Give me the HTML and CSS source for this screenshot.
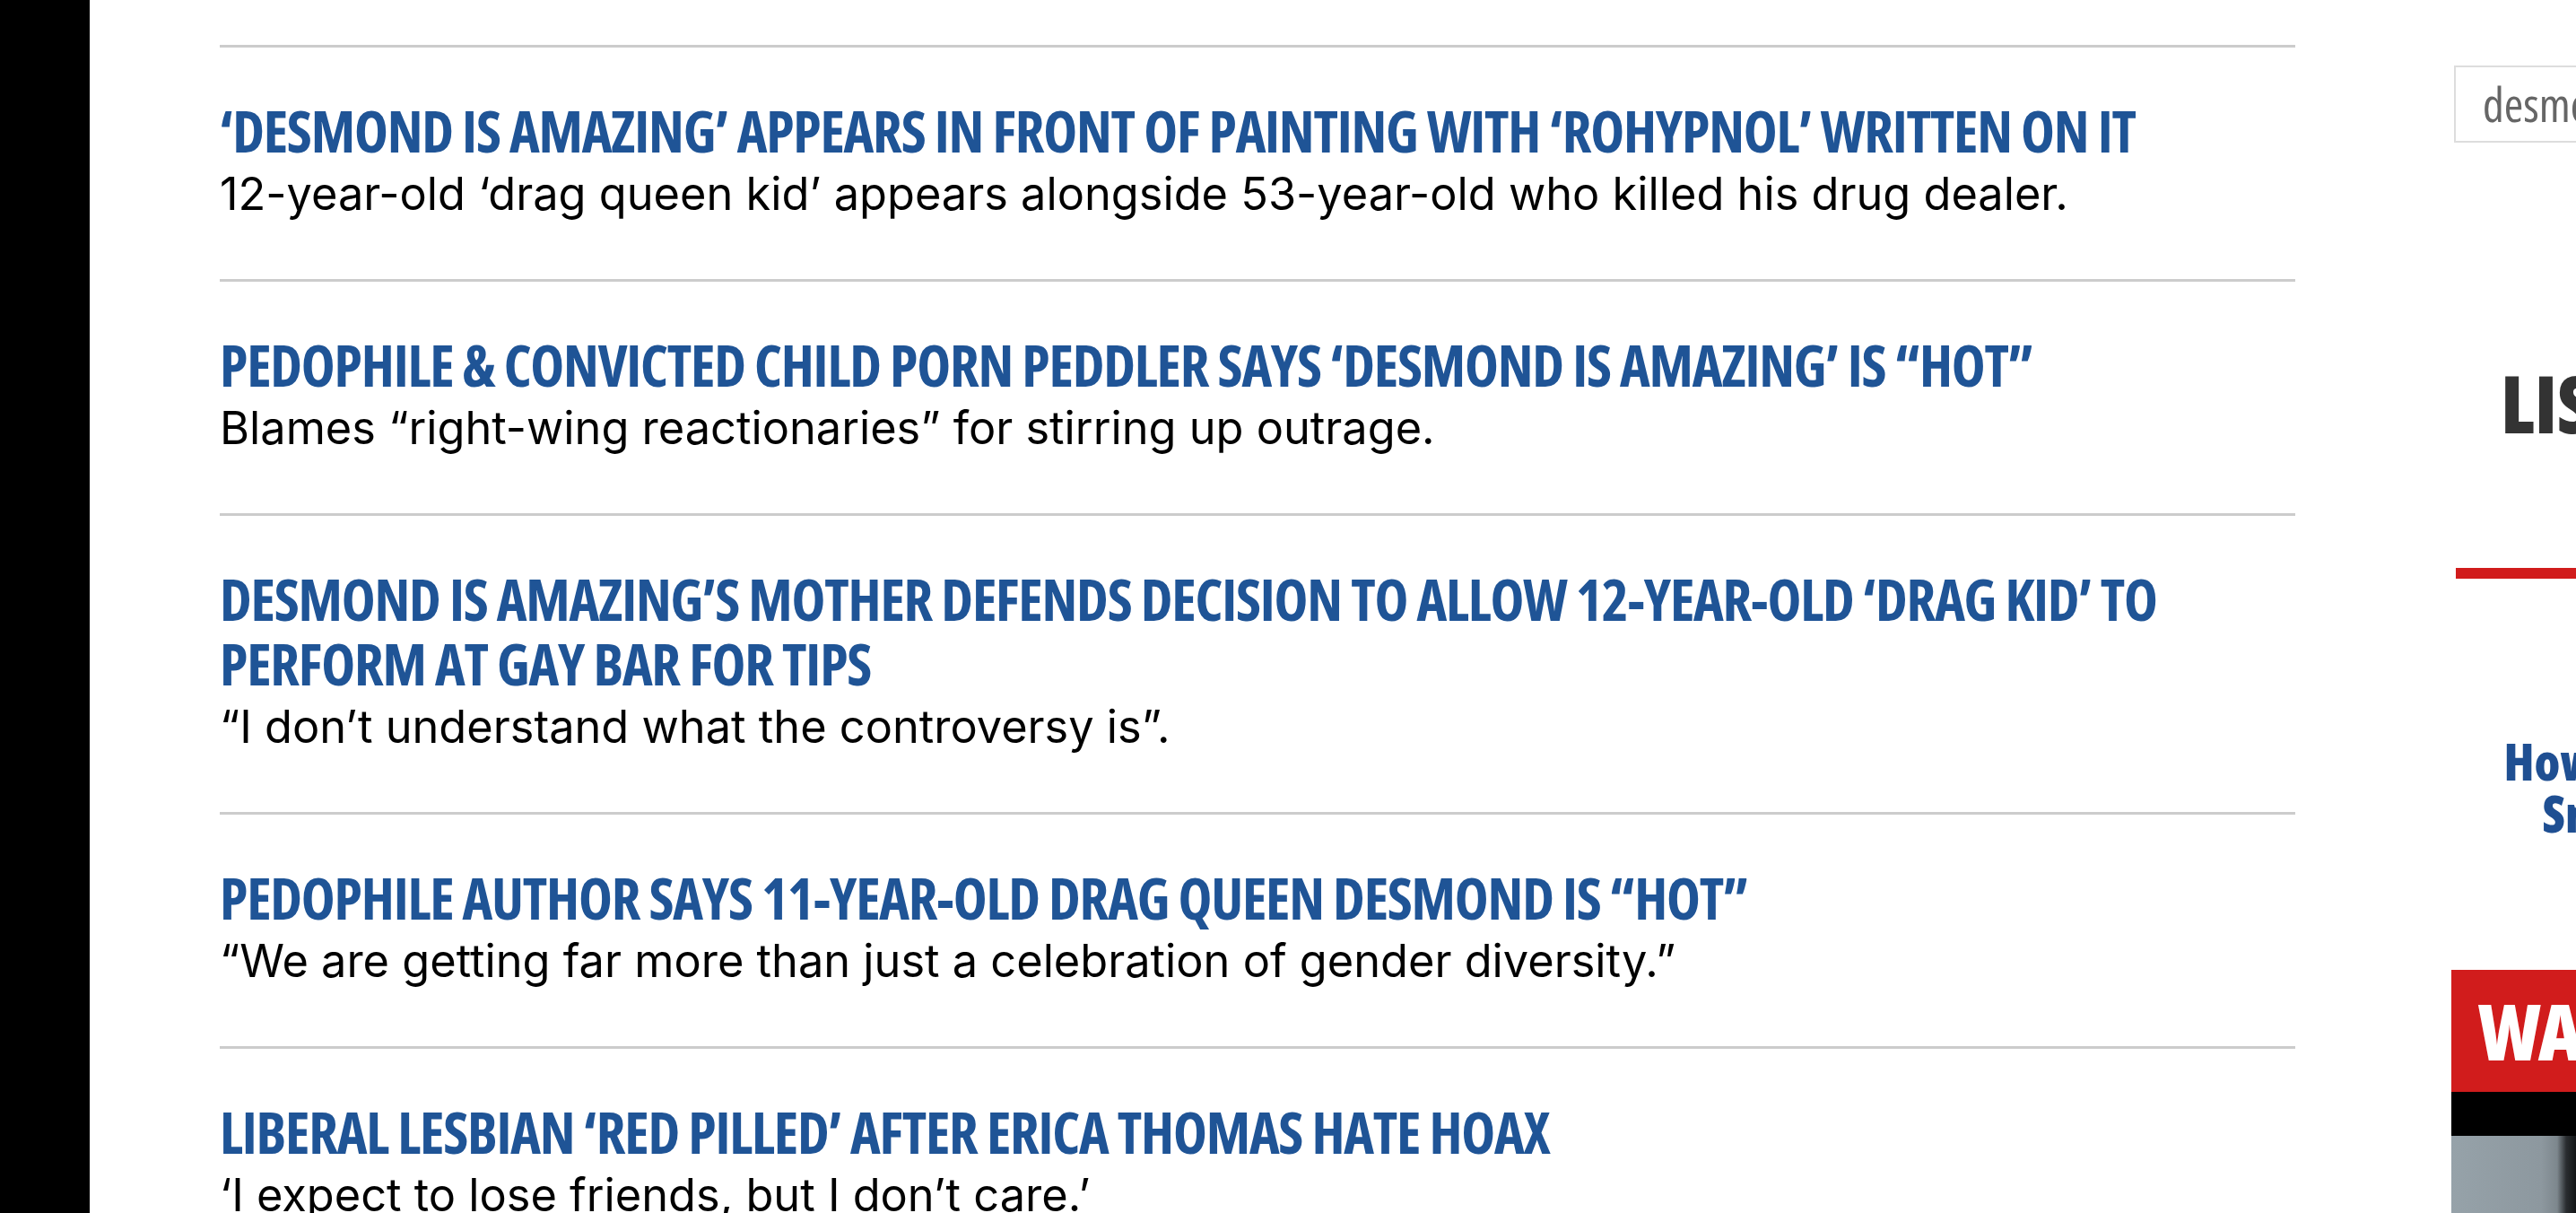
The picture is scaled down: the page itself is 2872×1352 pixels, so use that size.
FILE: index.html
```html
<!DOCTYPE html>
<html lang="en">
<head>
<meta charset="utf-8">
<title>Search results: desmond is amazing</title>
<link rel="stylesheet" href="styles.css">
</head>
<body>
<div class="page">
  <div class="edge"></div>

  <main class="results">
    <article class="story">
      <h2 class="story-title"><a href="#">‘DESMOND IS AMAZING’ APPEARS IN FRONT OF PAINTING WITH ‘ROHYPNOL’ WRITTEN ON IT</a></h2>
      <p class="story-dek">12-year-old ‘drag queen kid’ appears alongside 53-year-old who killed his drug dealer.</p>
    </article>
    <article class="story">
      <h2 class="story-title"><a href="#">PEDOPHILE &amp; CONVICTED CHILD PORN PEDDLER SAYS ‘DESMOND IS AMAZING’ IS “HOT”</a></h2>
      <p class="story-dek">Blames “right-wing reactionaries” for stirring up outrage.</p>
    </article>
    <article class="story">
      <h2 class="story-title"><a href="#">DESMOND IS AMAZING’S MOTHER DEFENDS DECISION TO ALLOW 12-YEAR-OLD ‘DRAG KID’ TO PERFORM AT GAY BAR FOR TIPS</a></h2>
      <p class="story-dek">“I don’t understand what the controversy is”.</p>
    </article>
    <article class="story">
      <h2 class="story-title"><a href="#">PEDOPHILE AUTHOR SAYS 11-YEAR-OLD DRAG QUEEN DESMOND IS “HOT”</a></h2>
      <p class="story-dek">“We are getting far more than just a celebration of gender diversity.”</p>
    </article>
    <article class="story">
      <h2 class="story-title"><a href="#">LIBERAL LESBIAN ‘RED PILLED’ AFTER ERICA THOMAS HATE HOAX</a></h2>
      <p class="story-dek">‘I expect to lose friends, but I don’t care.’</p>
    </article>
  </main>

  <aside class="sidebar">
    <div class="search-box">desmond is amazing</div>
    <h3 class="side-heading">LISTEN</h3>
    <div class="red-rule"></div>
    <div class="side-promo">
      <a class="promo-line" href="#">How Globalists Plan To</a>
      <a class="promo-line" href="#">Smash Free Speech</a>
    </div>
    <div class="watch-card">
      <div class="watch-bar">WATCH</div>
      <div class="watch-band"></div>
      <div class="watch-image"></div>
    </div>
  </aside>
</div>
</body>
</html>
```
FILE: styles.css
```css
html, body {
  margin: 0;
  padding: 0;
  background: #fff;
  overflow: hidden;
}

.page {
  display: flex;
  align-items: flex-start;
  min-height: 1352px;
}

.edge {
  flex: none;
  width: 100px;
  align-self: stretch;
  background: #000;
}

.results {
  flex: none;
  width: 2314px;
  margin-left: 145px;
  padding-top: 50px;
}

.story {
  border-top: 3px solid #cccccc;
  padding: 57px 0 61px;
}

.story-title {
  margin: 0;
  font-family: "Open Sans", sans-serif;
  font-stretch: 75%;
  font-weight: 700;
  font-size: 64px;
  line-height: 72px;
  letter-spacing: -1.2px;
}

.story-title a {
  color: #1f5496;
  text-decoration: none;
}

.story-dek {
  margin: 0;
  font-family: "Inter", sans-serif;
  font-size: 50.5px;
  line-height: 68px;
  color: #000;
}

.sidebar {
  flex: none;
  width: 634px;
  margin-left: 174px;
  padding-top: 73px;
  display: flex;
  flex-direction: column;
}

.search-box {
  margin-left: 3px;
  border: 2px solid #dddddd;
  padding: 0 0 0 30px;
  height: 82px;
  line-height: 82px;
  font-family: "Open Sans", sans-serif;
  font-stretch: 75%;
  font-weight: 400;
  font-size: 52px;
  color: #666;
  white-space: nowrap;
}

.side-heading {
  margin: 240px 0 0;
  padding-left: 55px;
  font-family: "Open Sans", sans-serif;
  font-stretch: 75%;
  font-weight: 800;
  font-size: 88px;
  line-height: 100px;
  color: #333;
}

.red-rule {
  margin: 134px 0 0 5px;
  height: 12px;
  background: #d11c1c;
}

.side-promo {
  margin-top: 174px;
  display: flex;
  flex-direction: column;
  align-items: center;
  font-family: "Open Sans", sans-serif;
  font-stretch: 75%;
  font-weight: 800;
  font-size: 56px;
  line-height: 58px;
}

.promo-line {
  color: #1f4f92;
  text-decoration: none;
  white-space: nowrap;
}

.watch-card {
  margin-top: 146px;
}

.watch-bar {
  background: #d11c1c;
  color: #fff;
  height: 136px;
  line-height: 136px;
  padding-left: 30px;
  font-family: "Open Sans", sans-serif;
  font-stretch: 75%;
  font-weight: 800;
  font-size: 86px;
  letter-spacing: -3px;
  white-space: nowrap;
}

.watch-band {
  height: 49px;
  background: #000;
}

.watch-image {
  height: 200px;
  background: linear-gradient(90deg, #96a2a9 0px, #8d989f 100px, #7d878d 118px, #2a2d30 128px, #101214 140px, #1a1c1e 400px);
}
```
